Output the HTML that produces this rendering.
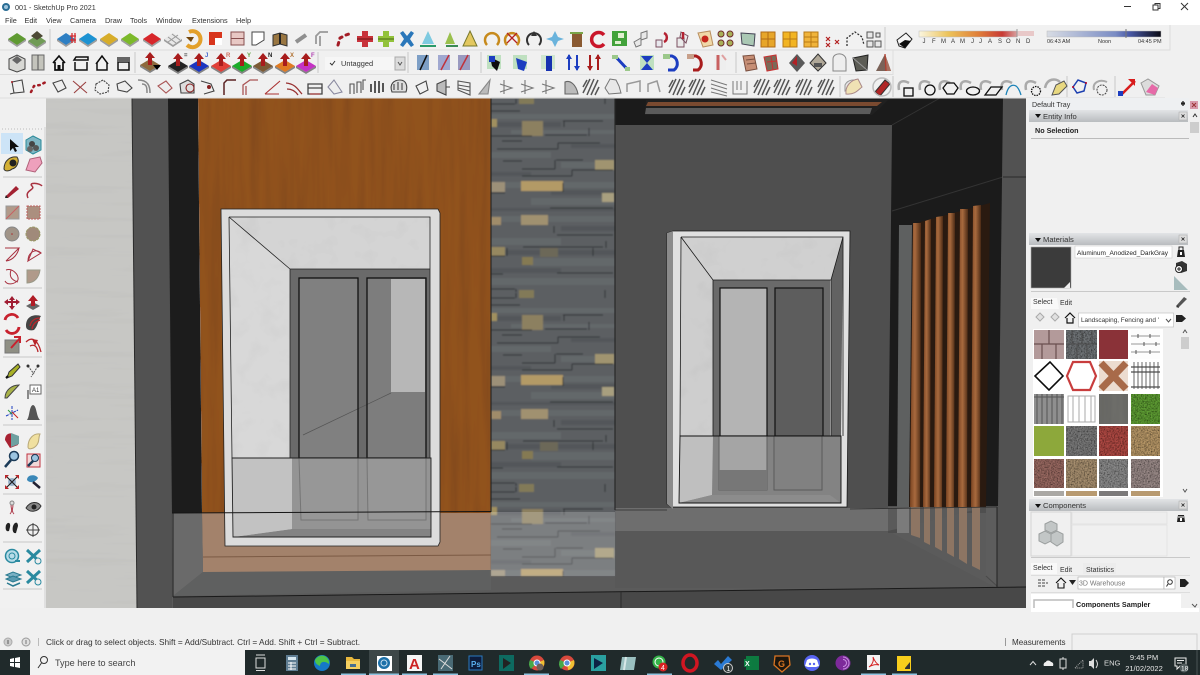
<!DOCTYPE html>
<html><head><meta charset="utf-8"><title>001 - SketchUp Pro 2021</title>
<style>
html,body{margin:0;padding:0;background:#f0f0f0;overflow:hidden}
svg{display:block;filter:blur(.35px)}
text{font-family:"Liberation Sans",sans-serif;font-size:8.3px;fill:#333}
</style></head><body>
<svg width="1200" height="675" viewBox="0 0 1200 675" xmlns="http://www.w3.org/2000/svg">
<defs>
<filter id="noise" x="0" y="0" width="100%" height="100%"><feTurbulence type="fractalNoise" baseFrequency=".7" numOctaves="2" seed="4" result="t"/><feColorMatrix in="t" type="matrix" values="0 0 0 1.6 -.1 0 0 0 1.6 -.1 0 0 0 1.6 -.1 0 0 0 0 1" result="g"/><feBlend in="SourceGraphic" in2="g" mode="multiply" result="b"/><feComposite in="b" in2="SourceAlpha" operator="in"/></filter>
<filter id="wood" x="0" y="0" width="100%" height="100%"><feTurbulence type="fractalNoise" baseFrequency=".1 .006" numOctaves="3" seed="8" result="t"/><feColorMatrix in="t" type="matrix" values="0 0 0 .35 .78 0 0 0 .35 .78 0 0 0 .35 .78 0 0 0 0 1" result="g"/><feBlend in="SourceGraphic" in2="g" mode="multiply" result="b"/><feComposite in="b" in2="SourceAlpha" operator="in"/></filter>
<filter id="hz" x="0" y="0" width="100%" height="100%"><feTurbulence type="fractalNoise" baseFrequency=".008 .12" numOctaves="3" seed="3" result="t"/><feColorMatrix in="t" type="matrix" values="0 0 0 .14 .93 0 0 0 .14 .93 0 0 0 .14 .93 0 0 0 0 1" result="g"/><feBlend in="SourceGraphic" in2="g" mode="multiply" result="b"/><feComposite in="b" in2="SourceAlpha" operator="in"/></filter>
<filter id="cloud" x="0" y="0" width="100%" height="100%"><feTurbulence type="fractalNoise" baseFrequency=".05" numOctaves="3" seed="6" result="t"/><feColorMatrix in="t" type="matrix" values="0 0 0 .16 .92 0 0 0 .16 .92 0 0 0 .16 .92 0 0 0 0 1" result="g"/><feBlend in="SourceGraphic" in2="g" mode="multiply" result="b"/><feComposite in="b" in2="SourceAlpha" operator="in"/></filter>
<filter id="bl"><feGaussianBlur stdDeviation=".7"/></filter>
<filter id="bl2"><feGaussianBlur stdDeviation=".3"/></filter>
<pattern id="stone" width="124" height="194" patternUnits="userSpaceOnUse" x="491" y="98">
<rect width="124" height="194" fill="#5b5e62"/>
<g fill="#64676b"><rect y="16" width="124" height="5"/><rect y="32" x="20" width="104" height="4"/><rect y="54" width="60" height="6"/><rect x="70" y="64" width="54" height="6"/><rect y="84" width="124" height="6"/><rect y="100" x="40" width="84" height="7"/><rect y="118" width="124" height="6"/><rect y="140" width="70" height="7"/><rect y="160" x="40" width="84" height="8"/><rect y="180" width="124" height="7"/></g>
<g fill="#53565a"><rect y="24" width="70" height="5"/><rect y="46" x="80" width="44" height="4"/><rect y="74" width="40" height="4"/><rect x="60" y="92" width="64" height="5"/><rect y="110" width="124" height="3"/><rect y="128" x="70" width="54" height="5"/><rect y="152" width="124" height="5"/><rect y="170" width="70" height="5"/></g>
<g fill="#a0905f"><rect x="0" y="21" width="6" height="8"/><rect x="31" y="23" width="21" height="15" fill="#8c8060"/><rect x="104" y="62" width="19" height="10" fill="#a09470"/><rect x="0" y="84" width="14" height="10" fill="#9c9078"/><rect x="30" y="83" width="42" height="10" fill="#b39a66"/><rect x="111" y="95" width="12" height="9" fill="#a89f7f"/><rect x="0" y="119" width="10" height="8" fill="#a08c6a"/><rect x="30" y="117" width="27" height="10" fill="#a0916f"/><rect x="0" y="149" width="14" height="9" fill="#968860"/><rect x="49" y="150" width="18" height="9" fill="#6c6858"/><rect x="31" y="159" width="11" height="8" fill="#857a52"/><rect x="28" y="192" width="15" height="2" fill="#827a58"/><rect x="28" y="0" width="15" height="6" fill="#827a58"/></g>
<path d="M0 6H24M25 1V6M0 13H29M72 23H112M73 23V29M54 37H96M98 30V38M0 38H41M11 43H31M6 51H67M67 45V51M67 45H109M65 62H92M64 62V71M31 71H64M12 63H31M81 72H122M81 72V78M31 78H81M72 85V94M0 95H14M59 110H122M63 128V135M66 137H122M32 149H112M115 143V150M16 150V158M102 150V158M0 158H14M0 176H12M66 175H122M0 191H24M25 191V194M114 192V194M114 0V6" stroke="#23262a" stroke-width="1" stroke-opacity=".85" fill="none"/>
</pattern>
<linearGradient id="hdr" x1="0" y1="0" x2="0" y2="1"><stop offset="0" stop-color="#e2e4e6"/><stop offset="1" stop-color="#b9bcbf"/></linearGradient>
<linearGradient id="scale" x1="0" x2="1"><stop offset="0" stop-color="#fbf6e0"/><stop offset=".3" stop-color="#ecc35a"/><stop offset=".6" stop-color="#e0803a"/><stop offset=".85" stop-color="#c83a34"/><stop offset="1" stop-color="#d8a0a0"/></linearGradient>
<linearGradient id="time" x1="0" x2="1"><stop offset="0" stop-color="#d8dce4"/><stop offset=".6" stop-color="#7a8cc4"/><stop offset=".72" stop-color="#4a5aa8"/><stop offset="1" stop-color="#0a0a14"/></linearGradient>
<linearGradient id="slat" x1="0" x2="1"><stop offset="0" stop-color="#7a4422"/><stop offset=".45" stop-color="#a86a3e"/><stop offset="1" stop-color="#4e2c16"/></linearGradient>
<g id="iso"><path d="M-9 0L0-6 9 0 0 6Z"/><path d="M-9 0L0 6 9 0V2L0 8-9 2Z" fill="#000" opacity=".35"/></g>
<g id="pp"><path d="M-10 3L0-3 10 3 0 9Z"/><path d="M-10 3L0 9 10 3V5L0 11-10 5Z" fill="#000" opacity=".45"/><path d="M0-10L5-4H2V3H-2V-4H-5Z" fill="#a81c1e"/></g>
<g id="cam"><path d="M-8-4L0-8 8-4V6L0 9-8 6Z" fill="#d8d8d4" stroke="#444"/></g>
<g id="hatch" fill="none" stroke="#555" stroke-width="1.500"><path d="M-8 6L-1-8M-4 8L3-8M0 8L7-7M-8 0L-4-7M4 8L8 0"/></g>
<g id="sand" fill="#e8e8e8" stroke="#777" stroke-width="1"><path d="M-8 1L-3-8 3-7 6-1 8 6-4 7Z"/></g>
<g id="sh"><path d="M-9-3C-6-9 1-9 5-6L2-1-9 3Z" fill="#e6e6e6" stroke="#999"/></g>
</defs>

<rect width="1200" height="675" fill="#f0f0f0"/>

<!-- ====== VIEWPORT ====== -->
<g>
<rect x="46" y="98" width="980" height="510" fill="#4f4f4f"/>
<path d="M46 98H132L137 608H46Z" fill="#c7c7c4" filter="url(#hz)"/>
<path d="M132 98H168L172 608H137Z" fill="#525252"/>
<path d="M132 98L137 608" stroke="#2c2c2c" stroke-width="1"/>
<path d="M168 98H198L202 513H172Z" fill="#1c1c1c"/>
<path d="M198 98H491V513H202Z" fill="#91521f" filter="url(#wood)"/>
<!-- right wall -->
<rect x="615" y="98" width="411" height="27" fill="#1b1b1b"/>
<rect x="615" y="125" width="278" height="385" fill="#4f4f4f"/>
<path d="M646 100H888L880 108 872 115H645Z" fill="#202020"/>
<path d="M648 102H882L877 106H646Z" fill="#7a4a30"/>
<path d="M646 108H872L870 114H645Z" fill="#5b5b5b"/>
<path d="M892 125V98H1003V506H888Z" fill="#1b1b1b"/>
<path d="M892 211L1003 177" stroke="#333" stroke-width="1"/>
<path d="M892 125L940 98" stroke="#333" stroke-width="1"/>
<path d="M1003 98H1026V588H997Z" fill="#525252"/>
<path d="M1003 177H1026" stroke="#2a2a2a"/>
<path d="M899 225H912L909 507H897Z" fill="#5e6060"/>
<path d="M913 224L990 203 986 507H909Z" fill="#2a1a10"/>
<path d="M913 223H921L920 507H910Z" fill="url(#slat)"/>
<path d="M925 221L931 219 930 507H923Z" fill="url(#slat)"/>
<path d="M936 217L943 216 942 507H934Z" fill="url(#slat)"/>
<path d="M948 213L955 213 954 507H946Z" fill="url(#slat)"/>
<path d="M960 209H968L967 507H958Z" fill="url(#slat)"/>
<path d="M973 206L981 205 980 507H971Z" fill="url(#slat)"/>
<!-- floor -->
<path d="M172 513H997V588L1026 588V608H172Z" fill="#5b5b5b"/>
<path d="M202 513H491V572H203Z" fill="#a3826b"/>
<path d="M203 557L491 555" stroke="#7b5a44" stroke-width="1"/>
<path d="M172 513H202L203 572 173 596Z" fill="#6a6a6a"/>
<path d="M203 572L491 570V590L173 596Z" fill="#5f6060"/>
<path d="M615 508H888V531H615Z" fill="#6e6e6e"/>
<path d="M888 531L997 588H615V531Z" fill="#585858"/>
<path d="M888 508H897L897 533H888Z" fill="#4d4d4d"/>
<path d="M888 531L986 507H888Z" fill="#5a5a5a"/>
<path d="M615 508H888V531H615Z" fill="#6e6e6e"/>
<path d="M897 508H909V533H897Z" fill="#7b7b7b"/>
<g fill="#8d7563"><path d="M911 507H920V538L911 535Z"/><path d="M924 507H930V545L924 542Z"/><path d="M935 507H942V551L935 547Z"/><path d="M947 507H954V557L947 553Z"/><path d="M959 507H967V564L959 559Z"/><path d="M972 507H980V570L972 566Z"/></g>
<path d="M986 507H997V586L986 576Z" fill="#5d5d5d"/>
<path d="M986 576L997 586" stroke="#4a4a4a"/>
<path d="M173 597L1026 587V608H173Z" fill="#484848"/>
<path d="M173 597L1026 587" stroke="#1a1a1a" stroke-width="1"/>
<path d="M997 507V587M173 513V597" stroke="#222" stroke-width="1"/>
<path d="M621 592V608" stroke="#2a2a2a"/>
<!-- stone -->
<rect x="491" y="98" width="124" height="478" fill="url(#stone)" filter="url(#bl)"/>
<rect x="491" y="512" width="124" height="64" fill="#fff" opacity=".2"/>
<path d="M491 98V512M615 98V510" stroke="#1e1e1e" stroke-width="1"/>

<!-- left window -->
<path d="M221 209H438L440 213V542L438 546H225Z" fill="#dcdcdc" stroke="#222" stroke-width=".8"/>
<path d="M229 217H430V269H290Z" fill="#d4d4d4" filter="url(#cloud)"/>
<path d="M229 217L290 269V458H232Z" fill="#d8d8d8" filter="url(#cloud)"/>
<rect x="290" y="269" width="140" height="189" fill="#6a6a6a"/>
<rect x="299" y="278" width="59" height="180" fill="#808080"/>
<rect x="367" y="278" width="59" height="180" fill="#7d7d7d"/>
<rect x="391" y="279" width="34" height="113" fill="#b7b7b7"/>
<path d="M303 435L391 393" stroke="#555" stroke-width=".7"/>
<rect x="299" y="278" width="59" height="180" fill="none" stroke="#111" stroke-width="1.300"/>
<rect x="367" y="278" width="59" height="180" fill="none" stroke="#111" stroke-width="1.300"/>
<path d="M229 217H430V269H290V458M229 217L290 269M229 217L232 458M430 217V458" fill="none" stroke="#222" stroke-width=".8"/>
<path d="M232 458H431V537H233Z" fill="#c4c4c4"/>
<path d="M291 458H431V537H292Z" fill="#949494"/>
<path d="M292 529H431V537H233Z" fill="#838383"/>
<path d="M233 537L292 529V458H232Z" fill="#c2c2c2"/>
<path d="M299 458H358V520H301ZM367 458H426V520H368Z" fill="#979797" stroke="#757575"/>
<path d="M232 458H431L431 537H233Z" fill="none" stroke="#222" stroke-width=".9"/>
<path d="M172 513L491 511.500" stroke="#151515" stroke-width="1"/>

<!-- right window -->
<path d="M667 233L673 231H850L847 507H671L667 504Z" fill="#e0e0e0" stroke="#1a1a1a" stroke-width=".8"/>
<path d="M667 233L673 231 673 509 667 504Z" fill="#8b8b8b"/>
<path d="M681 237H843L831 280H713Z" fill="#d0d0d0" filter="url(#cloud)"/>
<path d="M681 237L713 280V436H680Z" fill="#cecece" filter="url(#cloud)"/>
<path d="M843 237L831 280V436H841Z" fill="#626262"/>
<rect x="713" y="280" width="117" height="156" fill="#6a6a6a"/>
<rect x="720" y="288" width="47" height="148" fill="#b4b4b4"/>
<rect x="775" y="288" width="48" height="148" fill="#5d5d5d"/>
<rect x="720" y="288" width="47" height="148" fill="none" stroke="#111" stroke-width="1.200"/>
<rect x="775" y="288" width="48" height="148" fill="none" stroke="#111" stroke-width="1.200"/>
<path d="M681 237H843V436M681 237L680 436M681 237L713 280H831L843 237M713 280V436M831 280V436" fill="none" stroke="#1a1a1a" stroke-width=".8"/>
<path d="M680 436H841V503H679Z" fill="#838383"/>
<path d="M680 436H713L712 495 679 503Z" fill="#bfbfbf"/>
<path d="M712 495H830L841 503H679Z" fill="#8c8c8c"/>
<path d="M719 436H767V490H719Z" fill="#a5a5a5" stroke="#606060"/>
<path d="M719 470H767V490H719Z" fill="#777"/>
<path d="M774 436H822V490H774Z" fill="#818181" stroke="#5a5a5a"/>
<path d="M680 436H841V503H679Z" fill="none" stroke="#111" stroke-width=".9"/>
<path d="M615 510H667M850 509L997 507" stroke="#2c2c2c" stroke-width=".8"/>
<path d="M46 98H1026" stroke="#aaa" stroke-width=".6"/>
</g>

<!-- ====== TITLE + MENU ====== -->
<rect width="1200" height="25" fill="#fff"/>
<g transform="translate(6,7)"><circle r="4" fill="#2a6d94"/><circle r="2" fill="#9fc4dc"/></g>
<text x="15" y="10" style="font-size:7.200px">001 - SketchUp Pro 2021</text>
<text x="5" y="23" style="font-size:7.300px">File</text><text x="24.500" y="23" style="font-size:7.300px">Edit</text><text x="46" y="23" style="font-size:7.300px">View</text><text x="70" y="23" style="font-size:7.300px">Camera</text><text x="105" y="23" style="font-size:7.300px">Draw</text><text x="130" y="23" style="font-size:7.300px">Tools</text><text x="156" y="23" style="font-size:7.300px">Window</text><text x="192" y="23" style="font-size:7.300px">Extensions</text><text x="236" y="23" style="font-size:7.300px">Help</text>
<path d="M1124 6.500H1131" stroke="#333"/><path d="M1153 5h5v5h-5zM1155 5V3.500h5v5h-2" fill="none" stroke="#333"/><path d="M1181 3L1188 10M1188 3L1181 10" stroke="#333" fill="none"/>

<!-- ====== TOOLBARS ====== -->
<rect y="25" width="1170" height="25" fill="#f1f1f1"/>
<path d="M0 50H1170V25" stroke="#dcdcdc" fill="none"/><path d="M0 74.500H893V50M0 98H1165" stroke="#dedede" fill="none"/>
<path d="M50 29V50M885 27V50M135 52V73M318 52V73M408 52V73M481 52V73M736 52V73M840 76V97M893 76V97M1067 76V97M1115 76V97" stroke="#c9c9c9"/>
<g filter="url(#bl2)">
<!-- row 1 -->
<use href="#iso" x="17" y="39" fill="#5f9a33"/>
<use href="#iso" x="37" y="41" fill="#6f9b56"/><path d="M31 36L37 31 43 36 37 40Z" fill="#4d4a36"/>
<use href="#iso" x="66" y="39" fill="#2e7fc3"/><path d="M70 36H76M70 40H76M72 33V43M75 33V43" stroke="#d42a2e" stroke-width="1.300"/>
<use href="#iso" x="88" y="39" fill="#1f92d2"/>
<use href="#iso" x="109" y="39" fill="#d7ad2b"/>
<use href="#iso" x="130" y="39" fill="#7cb92c"/>
<use href="#iso" x="152" y="39" fill="#d7262c"/>
<g><use href="#iso" x="173" y="39" fill="#e8e8e8"/><path d="M168 37L176 43M172 34L180 40M168 42L178 35" stroke="#999"/></g>
<path d="M189 32A8 8 0 1 1 187 45" fill="none" stroke="#e3a02b" stroke-width="4"/><path d="M186 37H194L191 42Z" fill="#73470f"/>
<rect x="209" y="32" width="13" height="13" fill="#d8361e"/><rect x="215" y="38" width="7" height="7" fill="#fff"/>
<rect x="231" y="32" width="13" height="13" fill="#e8c8c4" stroke="#884f50"/><path d="M231 38.500H244" stroke="#884f50"/>
<path d="M252 32H264V40L256 45H252Z" fill="#fff" stroke="#444"/>
<path d="M273 35L280 33 287 35V46L280 44 273 46Z" fill="#9a7743" stroke="#333"/><path d="M280 33V44" stroke="#222" stroke-width="2"/>
<path d="M296 42L306 35" stroke="#8f8f8f" stroke-width="4"/>
<path d="M316 44V36L320 32H328M320 36V46" fill="none" stroke="#999" stroke-width="1.800"/>
<path d="M338 45L340 38 346 35 352 33" stroke="#a31f25" stroke-dasharray="2.500 4.500" stroke-width="3" stroke-linecap="round" fill="none"/>
<path d="M362 31H368V36H373V42H368V47H362V42H357V36H362Z" fill="#c8323a"/><path d="M357 39H373" stroke="#6a1419"/>
<path d="M383 31H389V36H394V42H389V47H383V42H378V36H383Z" fill="#92c23a"/><path d="M378 39H394" stroke="#496b18"/>
<path d="M400 33L403 31 407 36 411 31 414 33 410 39 414 45 411 47 407 42 403 47 400 45 404 39Z" fill="#2b77ba"/>
<path d="M428 31L434 44H422Z" fill="#7ecae0"/><path d="M420 46H436" stroke="#2b9a68" stroke-width="2"/>
<path d="M450 32L455 44H445Z" fill="#9ac04e"/><path d="M446 46H458" stroke="#3a8a55" stroke-width="2"/>
<path d="M470 31L477 46H463Z" fill="#e3c85e" stroke="#77772a"/>
<path d="M487 45A7 7 0 1 1 497 45" fill="none" stroke="#c78a1c" stroke-width="2.500"/>
<path d="M507 45A7 7 0 1 1 517 45" fill="none" stroke="#c78a1c" stroke-width="2.500"/><path d="M507 33L517 43M517 33L507 43" stroke="#b42424" stroke-width="1.300"/>
<path d="M529 45A7 7 0 1 1 539 45" fill="none" stroke="#333" stroke-width="2"/><path d="M534 31L537 36 531 36Z" fill="#333"/>
<path d="M555 31L558 37 564 39 558 41 555 47 552 41 546 39 552 37Z" fill="#6bb3dc"/>
<rect x="572" y="34" width="10" height="13" fill="#8a5a30"/><path d="M570 33H583" stroke="#7aa54a" stroke-width="2"/>
<path d="M604 35A7 7 0 1 0 604 44" fill="none" stroke="#c9182a" stroke-width="3.500"/>
<path d="M612 31H627V46H612Z" fill="#43a23a"/><path d="M618 33H624V38H618ZM615 41H621V44H615Z" fill="#e0f0d0"/>
<path d="M634 42L641 38V45L636 47ZM641 33L647 31V38L641 40Z" fill="#e8e8e8" stroke="#777"/>
<path d="M656 40H662V47H656Z" fill="#e8e8ee" stroke="#7b5060"/><path d="M664 33A5 5 0 0 1 664 42" stroke="#b42030" stroke-width="2.500" fill="none"/>
<path d="M677 38H684V47H677ZM681 32L688 36 686 43 680 37Z" fill="#eaeaea" stroke="#7a5060"/><path d="M683 32V39" stroke="#b42030" stroke-width="2.500"/>
<path d="M698 33L710 31 713 45 703 47Z" fill="#f0d8a8" stroke="#b98e5e"/><circle cx="705" cy="39" r="3.500" fill="#c5281e"/>
<g fill="#a8b058" stroke="#702a2a"><circle cx="721" cy="34" r="3"/><circle cx="730" cy="34" r="3"/><circle cx="721" cy="43" r="3"/><circle cx="730" cy="43" r="3"/></g>
<path d="M741 33L755 34 754 46 742 44Z" fill="#aac8b4" stroke="#445"/>
<rect x="761" y="32" width="14" height="15" fill="#e7a62c" stroke="#b06c18"/><path d="M761 39H775M768 32V47" stroke="#b06c18"/>
<rect x="783" y="32" width="14" height="15" fill="#f2b424" stroke="#b87a18"/><path d="M783 39H797M790 32V47" stroke="#b87a18"/>
<rect x="804" y="32" width="14" height="15" fill="#f0b43a" stroke="#b87a18"/><path d="M804 37H818M804 42H818M811 32V47" stroke="#b87a18"/>
<path d="M826 37L830 41M830 37L826 41M826 43L830 47M830 43L826 47M835 40L839 44M839 40L835 44" stroke="#b32020" stroke-width="1.200"/>
<path d="M847 46V38L855 32 862 37 864 45" fill="none" stroke="#333" stroke-width="1.300" stroke-dasharray="2 1.500"/>
<g fill="#e8e8e8" stroke="#555"><rect x="867" y="32" width="6" height="6"/><rect x="875" y="41" width="6" height="6"/><rect x="867" y="41" width="6" height="6"/><rect x="876" y="33" width="4" height="4"/></g>
<!-- shadows -->
<path d="M897 40L906 33 912 39 905 48 899 46Z" fill="#f5f5f5" stroke="#222"/><path d="M899 44L905 40 911 41 905 48Z" fill="#111"/>
<!-- row 2 -->
<use href="#cam" x="17" y="63"/><path d="M12 60L17 56 22 60 17 64Z" fill="#666"/>
<path d="M32 55H44V70H32Z" fill="#c4c4bc" stroke="#666"/><path d="M38 55V70" stroke="#555"/>
<path d="M53 63L59 56 65 63M55 62V70H63V62" fill="none" stroke="#111" stroke-width="1.700"/><rect x="57.500" y="65" width="3" height="5" fill="#111"/>
<path d="M75 62V70H87V62M74 60H88V57H76Z" fill="none" stroke="#111" stroke-width="1.500"/>
<path d="M96 64L102 56 108 64M97 63V70H107V63" fill="none" stroke="#111" stroke-width="1.500"/>
<path d="M118 62H129V70H118Z" fill="none" stroke="#111" stroke-width="1.500"/><rect x="117" y="57" width="13" height="5" fill="#666"/>
<use href="#pp" x="150" y="62" fill="#8d6b3c"/><path d="M153 65H161L157 70Z" fill="#000"/>
<use href="#pp" x="178" y="63" fill="#222"/><text x="184" y="57" style="font-size:6px;font-weight:bold">=</text>
<use href="#pp" x="199" y="63" fill="#1a35c0"/><text x="205" y="57" style="font-size:6px;font-weight:bold;fill:#4466cc">J</text>
<use href="#pp" x="221" y="63" fill="#e04038"/><text x="226" y="57" style="font-size:6px;font-weight:bold;fill:#d07060">R</text>
<use href="#pp" x="242" y="63" fill="#1cab2c"/><text x="247" y="57" style="font-size:6px;font-weight:bold;fill:#60a040">Y</text>
<use href="#pp" x="263" y="63" fill="#7b5a34"/><text x="268" y="57" style="font-size:6px;font-weight:bold;fill:#222">N</text>
<use href="#pp" x="285" y="63" fill="#e07a22"/><text x="290" y="57" style="font-size:6px;font-weight:bold;fill:#b07030">X</text>
<use href="#pp" x="306" y="63" fill="#c430c4"/><text x="311" y="57" style="font-size:6px;font-weight:bold;fill:#b040b0">F</text>
<rect x="325" y="57" width="80" height="13" fill="#f6f6f6"/><rect x="395" y="57" width="10" height="13" fill="#dcdcdc" stroke="#aaa"/><path d="M398 62L400 65 402 62" fill="none" stroke="#555"/>
<path d="M330 63L332 65 335 61" fill="none" stroke="#333"/>
<text x="341" y="66" style="font-size:7.400px">Untagged</text>
<path d="M417 55H429V70H417Z" fill="#7d9fc6"/><path d="M420 70L427 55" stroke="#111" stroke-width="1.500"/>
<path d="M438 55H450V70H438Z" fill="#a0a8d0"/><path d="M441 70L449 55" stroke="#c0303a" stroke-width="1.500"/>
<path d="M458 55H470V70H458Z" fill="#9a9ac0"/><path d="M460 70L468 55" stroke="#c0303a" stroke-width="1.500"/>
<rect x="487" y="55" width="14" height="14" fill="#bfe0c0"/><path d="M490 57L500 62 497 71 492 66Z" fill="#111"/><rect x="489" y="56" width="6" height="6" fill="#1a3dc0"/>
<rect x="513" y="55" width="14" height="14" fill="#bfe0c0"/><path d="M516 58L527 62 524 71 518 69Z" fill="#1a3dc0"/>
<rect x="541" y="55" width="14" height="14" fill="#cfe6cf"/><rect x="546" y="56" width="6" height="15" fill="#1530b0"/>
<path d="M569 55V70M577 55V70" stroke="#1a3dc0" stroke-width="2"/><path d="M566 59L569 54 572 59M574 66L577 71 580 66" fill="#1a3dc0"/>
<path d="M590 55V70M598 55V70" stroke="#a81c1e" stroke-width="2"/><path d="M587 66L590 71 593 66M595 59L598 54 601 59" fill="#a81c1e"/>
<path d="M615 56L628 70" stroke="#1a3dc0" stroke-width="3"/><path d="M612 55H618V59H612ZM625 67H630V71H625Z" fill="#9bc88a"/>
<rect x="640" y="55" width="14" height="15" fill="#bfe0c0"/><path d="M641 56H653L647 63 653 70H641L647 63Z" fill="#1a3dc0"/>
<path d="M665 56H672A8 8 0 0 1 674 70H668" fill="none" stroke="#1a3dc0" stroke-width="3"/><path d="M663 54H670V59H663Z" fill="#9bc88a"/>
<path d="M690 56H696A8 8 0 0 1 698 70H693" fill="none" stroke="#a81c1e" stroke-width="3"/><path d="M687 54H694V59H687Z" fill="#c8a08a"/>
<path d="M714 55H726V70H714Z" fill="#eee"/><path d="M718 55V70" stroke="#c86060" stroke-width="3"/><path d="M722 55L726 60" stroke="#e0a0a0" stroke-width="2"/>
<path d="M743 56L754 55 757 69 746 71Z" fill="#c68e74" stroke="#7a5040"/><path d="M746 60L755 59M747 64L756 63" stroke="#7a5040"/>
<path d="M764 57L776 55 778 69 767 71Z" fill="#7a6a58" stroke="#c83030"/><path d="M767 62L777 61M771 56L773 70" stroke="#c83030"/>
<path d="M797 54L805 63 797 72 789 63Z" fill="#5a5a5a"/><path d="M797 56L797 66 792 63Z" fill="#b02028"/>
<path d="M818 54L826 63 818 71 810 63Z" fill="#b0a898" stroke="#333"/><path d="M814 63H822V67H814Z" fill="#555"/>
<path d="M833 71V59C833 52 846 52 846 60V71Z" fill="#eee" stroke="#888"/>
<path d="M853 58L868 55 867 70 856 71Z" fill="#5b5b54" stroke="#222"/><path d="M853 58L867 70" stroke="#999"/>
<path d="M876 71L885 54 891 71Z" fill="#7a6258"/><path d="M885 54L891 71H886Z" fill="#a8705e"/><path d="M885 54L886 71" stroke="#b04030" stroke-width="1.300"/>
<!-- row 3 -->
<g fill="none" stroke="#444" stroke-width="1.100">
<path d="M12 82L22 80 24 92 14 93ZM10 94L14 93"/><circle cx="12" cy="82" r="1" fill="#a31f25" stroke="none"/>
<path d="M31 92L34 86 40 85 46 82" stroke="#a31f25" stroke-width="2.500" stroke-dasharray="1.500 4" stroke-linecap="round"/>
<path d="M53 83L62 80 66 88 58 92Z" fill="#eee"/>
<path d="M73 81L87 93M74 93L86 82" stroke="#9a4040"/>
<path d="M96 84L103 80 109 85 108 92 100 94 95 90Z" stroke-dasharray="2 1"/><path d="M117 84L125 81 132 88 127 92 118 90Z" fill="#eee"/>
<path d="M138 80C148 80 150 86 150 93M142 84C147 84 147 88 147 93" stroke="#888" stroke-width="1.500"/>
<path d="M158 86L166 81 172 88 166 93Z" fill="#eee" stroke="#a55"/>
<path d="M180 84L188 80 194 84 194 93 181 93Z" fill="#ddd"/><circle cx="190" cy="88" r="4" fill="none" stroke="#822"/>
<path d="M201 81L211 84 214 91 204 94" stroke="#444"/><circle cx="209" cy="87" r="2" fill="#822" stroke="none"/>
<path d="M224 95V83L227 80H236" stroke="#5a2020" stroke-width="1.500"/>
<path d="M243 95V85L250 80H258M246 95V86" stroke="#a55" stroke-width="1.300"/>
<path d="M265 94L280 81M265 94H279" stroke="#a33"/><path d="M286 83C296 84 298 90 302 94M287 89C293 89 296 92 298 95" stroke="#933" stroke-width="1.300"/>
<path d="M308 94V84H322V94ZM308 88H322" stroke="#444" stroke-width="1.300"/><path d="M310 94H320" stroke="#a33"/>
<path d="M328 87L334 80 342 92 334 94Z" stroke="#8a8aa0" fill="#eee"/>
<path d="M350 94V84H354V94M357 93V82H361V93M363 90V80H366" stroke="#555"/>
<path d="M371 84V92M375 81V93M379 81V93M383 83V92" stroke="#555" stroke-width="2"/>
<path d="M392 92C389 84 394 80 400 80 406 80 408 86 406 92Z" fill="#ddd" stroke="#444"/><path d="M394 84V90M398 82V90M402 83V90" stroke="#444"/>
<path d="M416 86L426 81 428 90 420 94Z"/><path d="M437 84L446 80V95L437 91ZM446 87H450" fill="#bbb"/>
<path d="M458 81L470 83V95L458 90ZM458 85L470 87M458 88L470 91" stroke="#555"/>
<path d="M479 94L490 80 488 94Z" fill="#bbb" stroke="#888"/>
<path d="M500 84L512 88 500 92M504 80V94" stroke="#777"/><path d="M521 84L533 88 521 92M525 80V94" stroke="#777"/><path d="M542 84L554 88 542 92M546 80V94" stroke="#777"/>
<path d="M565 94V82C570 80 576 84 578 94Z" fill="#bbb" stroke="#666"/>
</g>
<use href="#hatch" x="591" y="87"/><use href="#sand" x="613" y="87"/><path d="M627 92V84L640 81V92" fill="none" stroke="#999" stroke-width="1.500"/><path d="M648 92V84L657 81 660 92" fill="none" stroke="#999" stroke-width="1.500"/>
<use href="#hatch" x="677" y="87"/><use href="#hatch" x="697" y="87"/>
<g fill="none" stroke="#777"><path d="M711 80L727 85M711 84L727 89M711 88L727 93M711 92L727 96"/><path d="M733 81V94H747V81M737 81V90M741 81V90"/></g>
<use href="#hatch" x="762" y="87"/><use href="#hatch" x="782" y="87"/><use href="#hatch" x="804" y="87"/><use href="#hatch" x="826" y="87"/>
<use href="#sh" x="854" y="88" /><path d="M846 94C845 86 851 80 858 79L862 87C858 90 855 95 846 94Z" fill="#efe2b4" stroke="#a88"/>
<path d="M875 92L885 80 890 84 880 96Z" fill="#b02828" stroke="#333"/><circle cx="882" cy="87" r="9" fill="none" stroke="#bbb" stroke-width="1.500"/>
<g fill="none" stroke="#aaa" stroke-width="2.500"><path d="M899 90C897 80 904 80 909 83"/><path d="M920 90C918 80 925 80 930 83"/><path d="M940 90C938 80 945 80 950 83"/><path d="M961 90C959 80 966 80 971 83"/><path d="M981 90C979 80 986 80 991 83"/><path d="M1002 90C1000 80 1007 80 1012 83"/><path d="M1026 90C1024 80 1031 80 1036 83"/><path d="M1045 88C1047 78 1056 78 1060 82"/></g>
<g fill="none" stroke="#111" stroke-width="1.300"><rect x="904" y="88" width="9" height="8"/><circle cx="930" cy="90" r="5"/><path d="M947 83L954 83 958 88 954 94H947L943 88Z"/><ellipse cx="973" cy="91" rx="6.500" ry="4"/><path d="M985 95L991 87H1002L996 95Z"/><circle cx="1036" cy="91" r="4.500" stroke-dasharray="1.500 1"/></g>
<path d="M1006 95C1008 86 1012 84 1016 86 1019 88 1020 92 1021 95" fill="none" stroke="#1f83b8" stroke-width="1.300"/>
<path d="M1052 95L1056 85 1064 81 1067 86 1059 94Z" fill="#e8d880" stroke="#555"/>
<path d="M1073 87L1078 80 1086 83 1084 91 1077 93Z" fill="none" stroke="#1f3fb0" stroke-width="1.500"/><circle cx="1073" cy="87" r="1" fill="#b02"/><circle cx="1086" cy="83" r="1" fill="#b02"/>
<path d="M1094 90C1092 82 1100 79 1107 82" fill="none" stroke="#aaa" stroke-width="2"/><circle cx="1102" cy="90" r="5" fill="none" stroke="#444" stroke-dasharray="2 1"/>
<path d="M1121 95L1135 81" stroke="#d81e1e" stroke-width="2.500"/><path d="M1135 79V86L1128 79Z" fill="#d81e1e"/><rect x="1118" y="91" width="5" height="5" fill="#1a3dc0"/>
<path d="M1141 83L1148 79 1159 86 1155 95H1146Z" fill="#dcdcdc" stroke="#999"/><path d="M1146 92L1152 84 1158 88 1155 95Z" fill="#e66ba8"/>
</g>
<!-- shadow scale -->
<rect x="919" y="31" width="98" height="6" fill="url(#scale)" stroke="#bbb" stroke-width=".5"/>
<rect x="1017" y="31" width="17" height="5" fill="#e8c8c8"/>
<path d="M1017 29V37" stroke="#999"/>
<text x="922.500" y="43" style="font-size:6px">J</text><text x="932" y="43" style="font-size:6px">F</text><text x="941" y="43" style="font-size:6px">M</text><text x="951" y="43" style="font-size:6px">A</text><text x="960" y="43" style="font-size:6px">M</text><text x="971" y="43" style="font-size:6px">J</text><text x="979" y="43" style="font-size:6px">J</text><text x="988" y="43" style="font-size:6px">A</text><text x="998" y="43" style="font-size:6px">S</text><text x="1006" y="43" style="font-size:6px">O</text><text x="1016" y="43" style="font-size:6px">N</text><text x="1026" y="43" style="font-size:6px">D</text>
<rect x="1047" y="31" width="114" height="6" fill="url(#time)" stroke="#bbb" stroke-width=".5"/>
<path d="M1126 29V38" stroke="#777"/>
<text x="1047" y="43" style="font-size:5.500px">06:43 AM</text><text x="1098" y="43" style="font-size:5.500px">Noon</text><text x="1138" y="43" style="font-size:5.500px">04:45 PM</text>

<!-- ====== LEFT TOOLBAR ====== -->
<rect x="0" y="127" width="45" height="482" fill="#f1f1f1"/>
<path d="M45 127V608" stroke="#d0d0d0"/>
<path d="M2 129H43" stroke="#bbb" stroke-dasharray="1 2"/>
<rect x="1" y="133" width="22" height="21" fill="#cde4f7"/>
<path d="M3 177H42M3 288H42M3 357H42M3 425H42M3 494H42M3 542H42M3 589H42" stroke="#c8c8c8"/>
<g filter="url(#bl2)">
<path d="M10 139L10 151 13 148 15 152 17 151 15 147 19 147Z" fill="#111"/>
<path d="M26 140L33 136 41 140V150L33 154 26 150Z" fill="#7fb6c4" stroke="#2a8a9a"/><circle cx="32" cy="144" r="3" fill="#444"/><circle cx="36" cy="148" r="3" fill="#555"/><circle cx="30" cy="149" r="3" fill="#666"/>
<path d="M4 169C4 160 11 156 17 157 20 161 17 168 12 169 10 171 5 172 4 169Z" fill="#d4b034" stroke="#333"/><circle cx="13" cy="163" r="3.500" fill="#222"/>
<path d="M26 170L30 159 40 157 42 163 35 172Z" fill="#eea0bc" stroke="#b06078"/>
<path d="M5 197L16 186 19 189 8 198Z" fill="#a32030"/><path d="M5 198L6 195 8 198Z" fill="#222"/>
<path d="M28 198C24 190 36 190 32 186 28 182 40 183 42 186" fill="none" stroke="#a83040" stroke-width="1.500"/>
<rect x="6" y="206" width="13" height="13" fill="#b09a8a" stroke="#999"/><path d="M6 219L19 206" stroke="#c86060"/>
<rect x="27" y="206" width="13" height="13" fill="#ab8f7f" stroke="#c06060" stroke-dasharray="2 1"/>
<circle cx="12" cy="234" r="7" fill="#a09488" stroke="#888"/><circle cx="12" cy="234" r=".8" fill="#a33"/>
<circle cx="33" cy="234" r="7" fill="#a08a7a" stroke="#996" stroke-dasharray="3 1"/>
<path d="M5 248H19L6 261" fill="none" stroke="#a83040" stroke-width="1"/><path d="M6 261C14 260 18 253 19 248" fill="none" stroke="#a83040"/>
<path d="M28 261L33 249 41 253Z" fill="none" stroke="#a83040"/><path d="M28 261C28 252 36 248 41 253" fill="none" stroke="#a83040"/>
<path d="M6 270C12 268 19 274 18 280 14 285 7 285 5 281M11 270C9 276 11 280 18 282" fill="none" stroke="#a83040"/>
<path d="M27 270H40C39 278 34 283 27 283Z" fill="#b09a8a" stroke="#998"/>
<path d="M12 296L15 300H13V301H16V299L20 302 16 305V303H13V306H15L12 310 9 306H11V303H8V305L4 302 8 299V301H11V300H9Z" fill="#a01f30"/>
<path d="M26 306L33 302 40 306 33 310Z" fill="#666"/><path d="M33 295L38 301H35V306H31V301H28Z" fill="#b01f28"/>
<path d="M5 320A7 7 0 0 1 18 318M19 327A7 7 0 0 1 6 330" fill="none" stroke="#c8202e" stroke-width="2.800"/>
<path d="M26 326C26 316 34 314 41 316 38 320 38 326 34 330 30 331 26 330 26 326Z" fill="#444"/><path d="M30 326C31 320 36 318 40 318M32 329C33 323 37 321 40 320" stroke="#b8262c" fill="none" stroke-width="1.300"/>
<rect x="5" y="340" width="14" height="13" fill="#8f8f84" stroke="#777"/><path d="M11 348L20 338M14 337H20V343" stroke="#c8202e" stroke-width="2" fill="none"/>
<path d="M26 342C32 336 38 340 41 352M30 346C34 344 37 346 38 352" fill="none" stroke="#b8262c" stroke-width="1.300"/><path d="M32 339L38 340 35 346Z" fill="#b8262c"/>
<path d="M9 372L18 364 20 367 12 376 7 378Z" fill="#a8b028" stroke="#333"/><path d="M8 376L6 378" stroke="#111" stroke-width="2"/>
<path d="M28 366L34 374M38 366L31 377" stroke="#555" stroke-dasharray="2 1"/><circle cx="28" cy="366" r="1.500" fill="#333"/><circle cx="38" cy="366" r="1.500" fill="#333"/>
<path d="M5 398C5 390 12 385 19 385L7 398Z" fill="#a8b248" stroke="#444"/>
<rect x="30" y="385" width="11" height="9" fill="#fff" stroke="#666"/><text x="32" y="392" style="font-size:6px">A1</text><path d="M28 390V399" stroke="#222"/>
<path d="M12 406V420M6 416L18 410" stroke="#1a3dc0" stroke-dasharray="3 1"/><path d="M12 412L18 418" stroke="#c82020"/><path d="M8 410L12 414" stroke="#2a9a3a"/>
<path d="M27 420C30 416 29 406 33 405 37 406 36 416 40 420Z" fill="#555"/>
<path d="M5 440C5 432 13 432 16 436L18 445 10 448Z" fill="#a82030"/><path d="M11 433L19 436V444L11 447Z" fill="#6ea0a0"/>
<path d="M28 447C28 438 34 433 40 434 38 438 40 442 36 446 33 449 28 450 28 447Z" fill="#f0e0a0" stroke="#b8a878"/>
<circle cx="14" cy="456" r="4.500" fill="#9cc4e0" stroke="#1a3a58" stroke-width="1.500"/><path d="M11 460L5 467" stroke="#1a3a58" stroke-width="2.500"/>
<rect x="27" y="454" width="13" height="13" fill="#f0d8d8" stroke="#c03040"/><circle cx="35" cy="458" r="3.500" fill="#9cc4e0" stroke="#1a3a58"/><path d="M33 461L28 466" stroke="#1a3a58" stroke-width="2.500"/>
<circle cx="12" cy="482" r="4" fill="#9ab4cc"/><path d="M6 476L18 488M18 476L6 488" stroke="#222" stroke-width="1.200"/><path d="M5 475H9L5 479ZM19 475H15L19 479ZM5 489H9L5 485ZM19 489H15L19 485Z" fill="#b8262c"/>
<path d="M27 480C27 474 36 474 38 478 36 482 30 484 27 480Z" fill="#3a88b8"/><path d="M33 482L40 488" stroke="#223" stroke-width="2.500"/>
<path d="M12 502C9 506 14 510 10 514M12 502C15 506 10 510 14 514" fill="none" stroke="#b04050"/><circle cx="12" cy="503" r="2" fill="#ddd" stroke="#888"/>
<path d="M26 508C30 501 38 501 41 506 38 512 30 513 26 508Z" fill="#888" stroke="#333"/><circle cx="34" cy="507" r="2.500" fill="#222"/>
<path d="M6 525C8 521 11 523 10 527L9 531C6 532 5 529 6 525ZM13 526C15 521 18 522 18 526L16 533C13 534 12 530 13 526Z" fill="#222"/>
<circle cx="33" cy="530" r="5.500" fill="none" stroke="#444"/><path d="M26 530H40M33 523V537" stroke="#444"/>
<circle cx="12" cy="556" r="6.500" fill="#b8dce8" stroke="#2a8aa0" stroke-width="1.500"/><circle cx="12" cy="556" r="3" fill="none" stroke="#2a8aa0"/><path d="M15 561H20" stroke="#2a8aa0" stroke-width="2"/>
<path d="M27 550L40 562M40 550L27 562" stroke="#2a8aa0" stroke-width="3"/><circle cx="38" cy="561" r="3" fill="#eee" stroke="#2a8aa0"/>
<path d="M6 575L13 572 21 575 13 578Z" fill="#7ab0c4" stroke="#2a7a90"/><path d="M6 579L13 582 21 579 13 576Z" fill="#5a9ab0" stroke="#2a7a90"/><path d="M7 583L13 586 20 583" fill="none" stroke="#2a7a90" stroke-width="1.500"/>
<path d="M27 571L40 583M40 571L27 583" stroke="#2a8aa0" stroke-width="3"/><circle cx="38" cy="582" r="3" fill="#eee" stroke="#2a8aa0"/>
</g>

<!-- ====== RIGHT TRAY ====== -->
<rect x="1026" y="98" width="174" height="514" fill="#f0f0f0"/>
<rect x="1029" y="98" width="160" height="12" fill="#eef0f2"/>
<text x="1032" y="107" style="font-size:7.100px">Default Tray</text>
<path d="M1181 103H1185M1183 101V106M1181 104H1185" stroke="#222" stroke-width="1.300"/>
<rect x="1190" y="101" width="8" height="8" fill="#d89aaa"/><path d="M1192 103L1196 107M1196 103L1192 107" stroke="#933"/>
<rect x="1029" y="110" width="159" height="12" fill="url(#hdr)"/>
<path d="M1035 114L1038 118 1041 114Z" fill="#111"/>
<text x="1043" y="119" style="font-size:7.600px">Entity Info</text>
<rect x="1179" y="112" width="8" height="8" fill="#ddd" stroke="#aaa" stroke-width=".5"/><path d="M1181.500 114.500L1184.500 117.500M1184.500 114.500L1181.500 117.500" stroke="#222" stroke-width=".8"/>
<path d="M1193 117L1195 114 1197 117" fill="none" stroke="#333"/>
<rect x="1190" y="122" width="9" height="11" fill="#cdcdcd"/>
<text x="1035" y="133" style="font-size:7.200px;font-weight:bold;fill:#222">No Selection</text>
<path d="M1031 138.500H1189" stroke="#bbb"/>

<rect x="1029" y="233" width="159" height="12" fill="url(#hdr)"/>
<path d="M1035 238L1038 242 1041 238Z" fill="#111"/>
<text x="1043" y="242" style="font-size:7.600px">Materials</text>
<rect x="1179" y="235" width="8" height="8" fill="#ddd" stroke="#aaa" stroke-width=".5"/><path d="M1181.500 237.500L1184.500 240.500M1184.500 237.500L1181.500 240.500" stroke="#222" stroke-width=".8"/>
<rect x="1031" y="247" width="40" height="41" fill="#3b3b3b" stroke="#aaa" stroke-width=".6"/>
<path d="M1070 282V288H1064Z" fill="#eee"/>
<rect x="1075" y="246" width="97" height="12" fill="#fff" stroke="#ccc" stroke-width=".6"/>
<text x="1077" y="255" style="font-size:6.500px;fill:#222">Aluminum_Anodized_DarkGray</text>
<path d="M1178 250H1184L1185 257H1177Z" fill="#222"/><path d="M1179 250V247H1183V250" fill="none" stroke="#222"/><rect x="1180" y="252" width="2" height="3" fill="#fff"/>
<path d="M1176 263L1182 261 1187 264 1187 271 1181 273 1176 270Z" fill="#333"/><circle cx="1179" cy="269" r="3.500" fill="#fff" stroke="#222"/><path d="M1177 269H1181M1179 267V271" stroke="#222"/>
<path d="M1174 276L1188 290H1174Z" fill="#a7bcbd"/>
<path d="M1031 291.500H1190" stroke="#c9c9c9"/>
<path d="M1031 309V298H1057L1059 309" fill="#f9f9f9"/>
<text x="1033" y="304" style="font-size:7px">Select</text><text x="1060" y="305" style="font-size:7px">Edit</text>
<path d="M1176 306L1184 297 1187 299 1179 307Z" fill="#555"/>
<path d="M1176 307L1178 305 1179 308Z" fill="#333"/>
<path d="M1036 317L1040 313 1044 317 1040 321Z" fill="#e0e0e0" stroke="#aaa"/><path d="M1051 317L1055 313 1059 317 1055 321Z" fill="#e0e0e0" stroke="#aaa"/>
<path d="M1065 318L1070 313 1075 318M1067 318V323H1073V318" fill="none" stroke="#111" stroke-width="1.200"/>
<rect x="1078.500" y="313" width="95" height="14" fill="#fff" stroke="#bbb" stroke-width=".6"/>
<text x="1081" y="322" style="font-size:6.400px;fill:#333">Landscaping, Fencing and '</text>
<path d="M1166 319L1168.500 322 1171 319" fill="none" stroke="#555"/>
<path d="M1176 315H1182L1186 318.500 1182 322H1176Z" fill="#222"/>
<rect x="1033" y="329" width="130" height="168" fill="#fff"/>
<path d="M1183 333L1185 330 1187 333" fill="none" stroke="#555"/>
<rect x="1181" y="337" width="8" height="12" fill="#cdcdcd"/>
<path d="M1183 489L1185 492 1187 489" fill="none" stroke="#555"/>
<g filter="url(#bl2)">
<!-- row 1 -->
<rect x="1034" y="330" width="30" height="29" fill="#b39a9a"/><path d="M1034 344H1064M1049 330V344M1042 344V359M1056 344V359" stroke="#6a5050" stroke-width="1.200"/>
<rect x="1066" y="330" width="31" height="29" fill="#717578" filter="url(#noise)"/><path d="M1072 330V344M1082 330V344M1092 330V344M1066 344H1097M1077 344V359M1087 344V359" stroke="#4b4b4b" stroke-width="1"/>
<rect x="1099" y="330" width="29" height="29" fill="#8a3238"/>
<rect x="1131" y="330" width="29" height="29" fill="#fdfdfd"/><path d="M1131 336H1160M1131 344H1160M1131 352H1160" stroke="#777" stroke-width=".7"/><path d="M1138 334V338M1150 334V338M1144 342V346M1156 342V346M1136 350V354M1150 350V354" stroke="#555"/>
<!-- row 2 -->
<rect x="1034" y="361" width="30" height="30" fill="#fff"/><path d="M1035 376L1050 362 1063 376 1049 390Z" fill="none" stroke="#111" stroke-width="1.600"/>
<rect x="1066" y="361" width="31" height="30" fill="#fff"/><path d="M1073 362H1090L1096 376 1090 390H1073L1067 376Z" fill="none" stroke="#c83e3c" stroke-width="2.200"/>
<rect x="1099" y="361" width="29" height="30" fill="#ecdcd0"/><path d="M1101 363L1126 389M1126 363L1101 389" stroke="#a86a48" stroke-width="7"/>
<rect x="1131" y="361" width="29" height="30" fill="#fff"/><path d="M1131 367H1160M1131 372H1160M1131 387H1160" stroke="#222"/><path d="M1134 362V389M1138 362V389M1142 362V389M1146 362V389M1150 362V389M1154 362V389M1158 362V389" stroke="#444" stroke-width=".8"/>
<!-- row 3 -->
<rect x="1034" y="394" width="30" height="30" fill="#8f8f8f"/><path d="M1034 397H1064M1037 394V424M1042 394V424M1047 394V424M1052 394V424M1057 394V424M1062 394V424" stroke="#555"/>
<rect x="1066" y="394" width="31" height="30" fill="#fff"/><path d="M1068 396H1095V422H1068ZM1073 396V422M1079 396V422M1085 396V422M1091 396V422" fill="none" stroke="#aaa"/>
<rect x="1099" y="394" width="29" height="30" fill="#6e6e6a" filter="url(#wood)"/>
<rect x="1131" y="394" width="29" height="30" fill="#5f9e34" filter="url(#noise)"/>
<!-- row 4 -->
<rect x="1034" y="426" width="30" height="30" fill="#8da83a"/>
<rect x="1066" y="426" width="31" height="30" fill="#7b7b7b" filter="url(#noise)"/>
<rect x="1099" y="426" width="29" height="30" fill="#b04a44" filter="url(#noise)"/>
<rect x="1131" y="426" width="29" height="30" fill="#b89868" filter="url(#noise)"/>
<!-- row 5 -->
<rect x="1034" y="459" width="30" height="29" fill="#9a6a62" filter="url(#noise)"/>
<rect x="1066" y="459" width="31" height="29" fill="#a89070" filter="url(#noise)"/>
<rect x="1099" y="459" width="29" height="29" fill="#8c8c8c" filter="url(#noise)"/>
<rect x="1131" y="459" width="29" height="29" fill="#9a8a88" filter="url(#noise)"/>
<!-- row 6 -->
<rect x="1034" y="491" width="30" height="5" fill="#aaa8a4"/><rect x="1066" y="491" width="31" height="5" fill="#b89a70"/><rect x="1099" y="491" width="29" height="5" fill="#7c7a7a"/><rect x="1131" y="491" width="29" height="5" fill="#b89a70"/>
</g>
<rect x="1029" y="499" width="159" height="12" fill="url(#hdr)"/>
<path d="M1035 504L1038 508 1041 504Z" fill="#111"/>
<text x="1043" y="508" style="font-size:7.600px">Components</text>
<rect x="1179" y="501" width="8" height="8" fill="#ddd" stroke="#aaa" stroke-width=".5"/><path d="M1181.500 503.500L1184.500 506.500M1184.500 503.500L1181.500 506.500" stroke="#222" stroke-width=".8"/>
<rect x="1031" y="512" width="40" height="44" fill="#f0f0f0" stroke="#d4d4d4"/>
<rect x="1072" y="512" width="95" height="12" fill="#eee" stroke="#ddd" stroke-width=".6"/>
<rect x="1072" y="525" width="95" height="31" fill="#f0f0f0" stroke="#ddd" stroke-width=".6"/>
<path d="M1178 515H1184L1185 522H1177Z" fill="#222"/><path d="M1178 517H1184" stroke="#fff"/><rect x="1180" y="518" width="2" height="3" fill="#fff"/>
<g fill="#c2c6c6" stroke="#9a9e9e"><path d="M1045 524L1051 521 1057 524V530L1051 533 1045 530Z"/><path d="M1039 534L1045 531 1051 534V541L1045 544 1039 541Z"/><path d="M1051 534L1057 531 1063 534V542L1057 546 1051 542Z"/></g>
<path d="M1031 557.500H1190" stroke="#c9c9c9"/>
<path d="M1031 574V563H1057V574" fill="#f9f9f9"/>
<text x="1033" y="570" style="font-size:7px">Select</text><text x="1060" y="572" style="font-size:7px">Edit</text><rect x="1083" y="563" width="33" height="11" fill="#ececec"/><text x="1086" y="572" style="font-size:7px">Statistics</text>
<path d="M1031 575.500H1190" stroke="#ddd"/>
<path d="M1038 580H1045M1038 583H1045M1038 586H1045" stroke="#444" stroke-dasharray="3 1"/><path d="M1046 583H1048" stroke="#444"/>
<path d="M1056 583L1061 578 1066 583M1058 583V588H1064V583" fill="none" stroke="#111" stroke-width="1.100"/>
<path d="M1069 580H1076L1072.500 585Z" fill="#222"/>
<rect x="1078" y="577" width="86" height="12" fill="#fff" stroke="#aaa" stroke-width=".6"/>
<text x="1079" y="585.500" style="font-size:7px;fill:#777">3D Warehouse</text>
<rect x="1164" y="577" width="11" height="12" fill="#fff" stroke="#aaa" stroke-width=".6"/>
<circle cx="1170" cy="582" r="2.300" fill="none" stroke="#333"/><path d="M1168 584L1166.500 586.500" stroke="#333"/>
<path d="M1180 579H1185L1189 583 1185 587H1180Z" fill="#222"/>
<path d="M1031 592.500H1190" stroke="#ddd"/>
<rect x="1031" y="594" width="150" height="18" fill="#fff"/>
<path d="M1034 611V600H1073V611" fill="#fff" stroke="#bbb" stroke-width="1.500"/>
<text x="1076" y="607" style="font-size:7.200px;font-weight:bold;fill:#222">Components Sampler</text>
<path d="M1192 604L1195 607 1197 604" fill="none" stroke="#555"/>

<!-- ====== STATUS BAR ====== -->
<rect y="608" width="1200" height="42" fill="#f0f0f0"/>
<circle cx="8" cy="642" r="4" fill="#ccc" stroke="#aaa"/><path d="M8 640V644" stroke="#777" stroke-width="1.300"/>
<circle cx="26" cy="642" r="4" fill="#e0e0e0" stroke="#999"/><path d="M26 640V644" stroke="#777"/>
<path d="M38.500 638V646" stroke="#bbb"/>
<text x="46" y="645" style="font-size:8.300px">Click or drag to select objects. Shift = Add/Subtract. Ctrl = Add. Shift + Ctrl = Subtract.</text>
<path d="M1005.500 638V646" stroke="#999"/>
<text x="1012" y="645" style="font-size:8.100px">Measurements</text>
<rect x="1072" y="634" width="125" height="17" fill="#f0f0f0" stroke="#cfcfcf"/>
<rect x="1031" y="608" width="168" height="4" fill="#fff"/>

<!-- ====== TASKBAR ====== -->
<rect y="650" width="1200" height="25" fill="#202a2b"/>
<path d="M10 659L14 658V662H10ZM15 658L20 657V662H15ZM10 663H14V667L10 666ZM15 663H20V668L15 667Z" fill="#fff"/>
<rect x="30" y="650" width="215" height="25" fill="#f2f2f2"/>
<circle cx="44" cy="660" r="3.500" fill="none" stroke="#333"/><path d="M41.500 663L38 668" stroke="#333"/>
<text x="55" y="666" style="font-size:9.100px;fill:#444">Type here to search</text>
<path d="M256 658H265V668H256ZM256 655H265M256 670.500H265" fill="none" stroke="#ddd"/>
<rect x="369" y="650" width="30" height="25" fill="#3d4748"/>
<g fill="#8fc4e0"><rect x="341" y="673.500" width="25" height="1.500"/><rect x="369" y="673.500" width="30" height="1.500"/><rect x="402" y="673.500" width="25" height="1.500"/><rect x="433" y="673.500" width="25" height="1.500"/><rect x="524" y="673.500" width="25" height="1.500"/><rect x="647" y="673.500" width="25" height="1.500"/><rect x="861" y="673.500" width="25" height="1.500"/><rect x="892" y="673.500" width="25" height="1.500"/></g>
<g filter="url(#bl2)">
<rect x="286" y="655" width="12" height="16" fill="#5f7d92"/><rect x="288" y="657" width="8" height="3" fill="#d8e8f0"/><path d="M288 663H296M288 666H296M288 669H296M291 662V670" stroke="#fff"/>
<circle cx="322" cy="663" r="8" fill="#1478c8"/><path d="M315 660C320 652 330 656 329 664 324 660 320 662 320 666 318 665 315 664 315 660Z" fill="#4ec44a"/>
<path d="M346 657H352L354 659H360V669H346Z" fill="#e8b83c"/><rect x="346" y="661" width="14" height="8" fill="#f5d060"/><rect x="350" y="664" width="6" height="3" fill="#4a7090"/>
<rect x="377" y="656" width="15" height="15" fill="#fff"/><circle cx="384" cy="663" r="6" fill="#1a6fa8"/><circle cx="384" cy="663" r="3" fill="none" stroke="#c8e0f0"/>
<rect x="407" y="655" width="15" height="16" fill="#f5f5f5"/><text x="409" y="669" style="font-size:15px;font-weight:bold;fill:#c22">A</text>
<rect x="438" y="655" width="15" height="16" fill="#4a6a74"/><path d="M439 659L452 669M441 669L450 656" stroke="#ddd"/>
<rect x="469" y="656" width="13" height="14" fill="#0e1e3c" stroke="#2b7ac0"/><text x="471" y="667" style="font-size:8px;fill:#5ab0f0;font-weight:bold">Ps</text>
<rect x="499" y="655" width="15" height="16" fill="#0e6a60"/><path d="M503 658L511 663 503 669Z" fill="#222"/>
<circle cx="537" cy="663" r="7.500" fill="#d8483c"/><path d="M537 663L531 669A7.500 7.500 0 0 1 530 660Z" fill="#4aa84a"/><path d="M537 663L544 660A7.500 7.500 0 0 1 538 670Z" fill="#f0c030"/><circle cx="537" cy="663" r="3" fill="#5a8fd8" stroke="#fff"/><circle cx="540" cy="667" r="3.500" fill="#706058"/>
<circle cx="567" cy="663" r="7.500" fill="#d8483c"/><path d="M567 663L561 669A7.500 7.500 0 0 1 560 660Z" fill="#4aa84a"/><path d="M567 663L574 660A7.500 7.500 0 0 1 568 670Z" fill="#f0c030"/><circle cx="567" cy="663" r="3" fill="#5a8fd8" stroke="#fff"/>
<rect x="591" y="655" width="15" height="16" fill="#2aa0a0"/><path d="M594 658L603 663 594 669Z" fill="#124"/>
<path d="M622 657H636L634 670H620Z" fill="#9ac0c0"/><path d="M626 657L624 670" stroke="#d8e8e8" stroke-width="2"/>
<circle cx="659" cy="662" r="6.500" fill="#36b34a"/><circle cx="659" cy="662" r="4" fill="none" stroke="#fff"/><circle cx="663" cy="667" r="4.500" fill="#d82020"/><text x="661" y="670" style="font-size:7px;fill:#fff">4</text>
<ellipse cx="690" cy="663" rx="7" ry="8" fill="none" stroke="#d01820" stroke-width="3.500"/>
<path d="M714 664L718 660 721 664 728 656 732 660 721 670Z" fill="#2b7ad4"/><circle cx="728" cy="668" r="4.500" fill="#303a3b" stroke="#ccc"/><text x="726.500" y="671" style="font-size:7px;fill:#fff">1</text>
<rect x="746" y="656" width="13" height="14" fill="#0d7a40"/><rect x="744" y="659" width="8" height="8" fill="#107c41"/><text x="745" y="666" style="font-size:7px;fill:#fff;font-weight:bold">X</text>
<path d="M775 656H789L790 665 782 672 774 665Z" fill="#1f1410" stroke="#d87420" stroke-width="1.300"/><text x="778" y="667" style="font-size:9px;font-weight:bold;fill:#d87420">G</text>
<circle cx="812" cy="663" r="8" fill="#5865f2"/><path d="M807 660C810 658 814 658 817 660L819 666 816 667H808L805 666Z" fill="#fff"/><circle cx="810" cy="664" r="1.200" fill="#5865f2"/><circle cx="814" cy="664" r="1.200" fill="#5865f2"/>
<circle cx="843" cy="663" r="7.500" fill="#7d2a9a"/><path d="M843 657A6 6 0 0 1 843 669M843 659.500A3.500 3.500 0 0 1 843 666.500" fill="none" stroke="#c890e0"/>
<rect x="867" y="655" width="13" height="15" fill="#f4f4f4"/><path d="M869 667C873 664 874 660 873 657 875 662 877 664 879 665 875 664 872 665 869 667Z" fill="none" stroke="#d42020"/>
<rect x="897" y="656" width="14" height="15" fill="#f8ce1c"/><path d="M905 668L910 662V669H905Z" fill="#333"/>
</g>
<path d="M1030 665L1033 661.500 1036 665" fill="none" stroke="#ddd"/>
<path d="M1044 666H1053C1054 663 1052 662 1051 662 1050 660 1046 660 1046 662 1044 662 1043 665 1044 666Z" fill="#eee"/>
<rect x="1060" y="659" width="6" height="9" fill="none" stroke="#ddd"/><path d="M1063 657V659M1063 668V670" stroke="#ddd"/>
<path d="M1075 668L1083 660V668Z" fill="none" stroke="#aaa" stroke-dasharray="1 1"/>
<path d="M1089 661H1091L1094 658V669L1091 666H1089Z" fill="#ddd"/><path d="M1096 660C1098 663 1098 665 1096 668" fill="none" stroke="#ddd"/>
<text x="1104" y="665.500" style="font-size:7.600px;fill:#ddd">ENG</text>
<text x="1144" y="660" text-anchor="middle" style="font-size:7.600px;fill:#e8e8e8">9:45 PM</text>
<text x="1144" y="671" text-anchor="middle" style="font-size:7.500px;fill:#e8e8e8">21/02/2022</text>
<path d="M1175 658H1186V666H1180L1177 669V666H1175Z" fill="none" stroke="#eee"/><path d="M1177 660.500H1184M1177 663H1182" stroke="#eee"/>
<circle cx="1184" cy="668" r="4.500" fill="#555f60"/><text x="1181" y="670.500" style="font-size:6.500px;fill:#fff">18</text>
<path d="M1197 650V675" stroke="#4a5455"/>
</svg>
</body></html>
